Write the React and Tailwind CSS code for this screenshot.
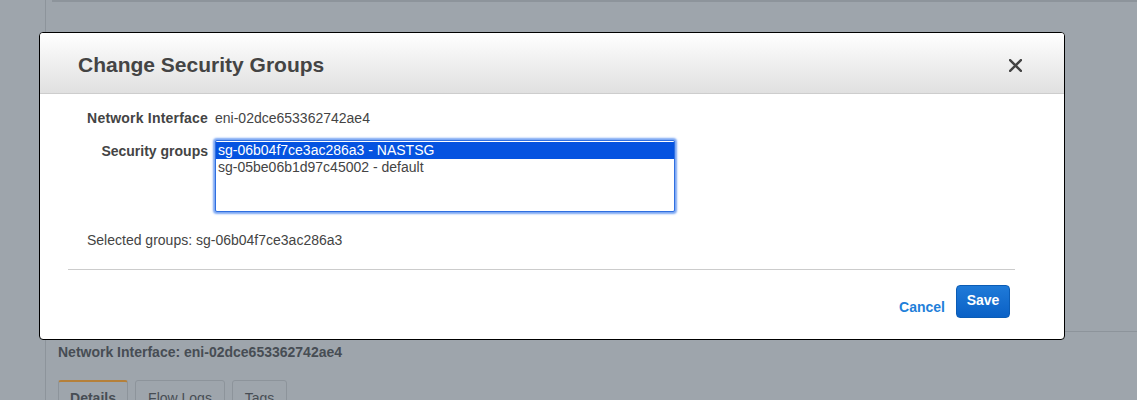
import { useState } from "react";

const FONT = "font-['Liberation_Sans',Arial,Helvetica,sans-serif]";

function CloseIcon() {
  return (
    <svg viewBox="0 0 12 12" className="w-[13px] h-[13px]" stroke="#444" strokeWidth="2.2" strokeLinecap="square">
      <path d="M1 1 L11 11 M11 1 L1 11" />
    </svg>
  );
}

const GROUPS = [
  { id: "sg-06b04f7ce3ac286a3", name: "NASTSG" },
  { id: "sg-05be06b1d97c45002", name: "default" },
];

function BackgroundPage() {
  return (
    <div className="flex w-full h-full">
      <div className="w-[46px] shrink-0 border-r border-[#8d949b]" />
      <div className="flex-1 flex flex-col">
        <div className="h-[331px] shrink-0 ml-[6px] border-t-2 border-[#8d949b]" />
        <div className="shrink-0 border-t border-[#8d949b] pl-[12px] pt-[12px]">
          <div className="text-[14px] font-bold text-[#474d54] leading-[17px]">
            Network Interface: eni-02dce653362742ae4
          </div>
          <div className="flex gap-[7px] mt-[19px] text-[14px] text-[#474d54]">
            <div className="w-[70px] h-[30px] border border-[#8d949b] border-t-2 border-t-[#b5803a] rounded-t-[3px] pt-[6px] text-center font-bold">
              Details
            </div>
            <div className="w-[90px] h-[30px] border border-[#8d949b] rounded-t-[3px] pt-[7px] text-center">
              Flow Logs
            </div>
            <div className="w-[55px] h-[30px] border border-[#8d949b] rounded-t-[3px] pt-[7px] text-center">
              Tags
            </div>
          </div>
        </div>
      </div>
    </div>
  );
}

export default function App() {
  const [selected, setSelected] = useState(GROUPS[0].id);

  return (
    <div className={`relative w-[1137px] h-[400px] overflow-hidden bg-[#9ea5ac] ${FONT}`}>
      <BackgroundPage />

      <div
        role="dialog"
        className="absolute left-[39px] top-[32px] w-[1026px] h-[308px] bg-white border border-black rounded-[4px] overflow-hidden flex flex-col"
      >
        <div className="h-[61px] shrink-0 bg-gradient-to-b from-white to-[#e0e0e0] border-b border-[#cdcdcd] flex items-center pl-[38px] pr-[42px] pt-[5px] justify-between">
          <h2 className="text-[21px] font-bold text-[#444] pb-[2px]">Change Security Groups</h2>
          <button className="w-[14px] h-[14px] flex items-center justify-center" aria-label="Close">
            <CloseIcon />
          </button>
        </div>

        <div className="flex flex-col text-[14px] text-[#444] leading-[17px]">
          <div className="flex mt-[16px]">
            <div className="w-[168px] text-right font-bold tracking-[0.2px]">Network Interface</div>
            <div className="ml-[7px]">eni-02dce653362742ae4</div>
          </div>

          <div className="flex mt-[13px]">
            <div className="w-[168px] text-right font-bold pt-[3px]">Security groups</div>
            <div
              role="listbox"
              className="ml-[7px] w-[460px] h-[72px] border border-[#2f6fe0] bg-white shadow-[0_0_2px_2px_#7aa6f3] rounded-[2px] pt-px"
            >
              {GROUPS.map((g) => (
                <div
                  key={g.id}
                  role="option"
                  aria-selected={selected === g.id}
                  onClick={() => setSelected(g.id)}
                  className={`h-[17px] pl-[2px] cursor-default ${selected === g.id ? "bg-[#0553e0] text-white" : "text-[#444]"}`}
                >
                  {g.id} - {g.name}
                </div>
              ))}
            </div>
          </div>

          <div className="ml-[47px] mt-[20px]">Selected groups: {selected}</div>

          <div className="ml-[28px] w-[947px] mt-[20px] border-t border-[#cccccc]" />

          <div className="flex items-center justify-end pr-[54px] mt-[15px] gap-[11px]">
            <button className="text-[14px] font-bold text-[#1f80d9] mt-[12px]">Cancel</button>
            <button className="w-[54px] h-[33px] rounded-[4px] border border-[#0b5cb5] bg-gradient-to-b from-[#1f7ad8] to-[#0a61c6] text-white font-bold text-[14px] pb-[3px]">
              Save
            </button>
          </div>
        </div>
      </div>
    </div>
  );
}
